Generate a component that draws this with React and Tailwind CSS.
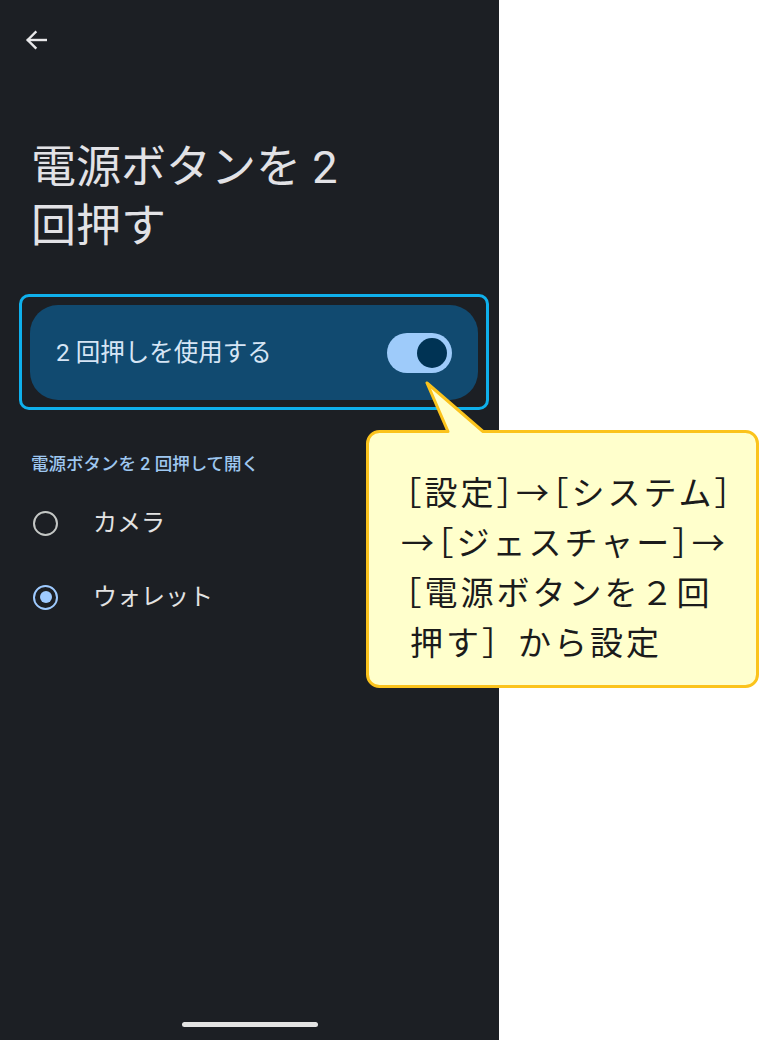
const font = { fontFamily: 'Roboto, "Noto Sans CJK JP", sans-serif' }

function BackArrow() {
  return (
    <svg width="22" height="20" viewBox="0 0 22 20" fill="none" stroke="#e8e8ea" strokeWidth="2.4" strokeLinecap="square">
      <path d="M21 10H3" />
      <path d="M10.5 2.2 2.7 10l7.8 7.8" />
    </svg>
  )
}

function Radio({ checked, label }) {
  return (
    <div className="h-[74px] flex items-center pl-[33px]">
      <div
        className={
          checked
            ? 'w-[25px] h-[25px] rounded-full border-[2.5px] border-[#9ecaff] flex items-center justify-center'
            : 'w-[25px] h-[25px] rounded-full border-[2.5px] border-[#c4c7c5]'
        }
      >
        {checked && <div className="w-[12px] h-[12px] rounded-full bg-[#9ecaff]" />}
      </div>
      <span className="ml-[35px] text-[24px] leading-[32px] text-[#e3e3e3]">{label}</span>
    </div>
  )
}

// half-width bracket, as the annotation tool sets them
function B({ children }) {
  return <span className="[font-feature-settings:'halt']">{children}</span>
}

function Callout() {
  return (
    <div className="absolute left-[364px] top-[380px] w-[398px] h-[310px]">
      <svg className="absolute inset-0" width="398" height="310" viewBox="0 0 398 310">
        <path
          d="M15.5 51.5H84L63 3l56 48.5h262.5a12 12 0 0 1 12 12v231a12 12 0 0 1-12 12h-366a12 12 0 0 1-12-12v-231a12 12 0 0 1 12-12Z"
          fill="#ffffcc"
          stroke="#fbc31c"
          strokeWidth="3"
          strokeLinejoin="round"
        />
      </svg>
      <div
        className="absolute left-[37px] top-[86px] text-[33px] leading-[50px] tracking-[3px] text-[#1b1b1b] whitespace-nowrap"
        style={{ fontFamily: '"Noto Sans CJK JP", sans-serif' }}
      >
        <div className="pl-[4px]">
          <B>［</B>設定<B>］</B>→<B>［</B>システム<B>］</B>
        </div>
        <div>
          →<B>［</B>ジェスチャー<B>］</B>→
        </div>
        <div className="pl-[4px]">
          <B>［</B>電源ボタンを２回
        </div>
        <div className="pl-[9px]">押す］から設定</div>
      </div>
    </div>
  )
}

export default function App() {
  return (
    <div className="relative w-[768px] h-[1040px] bg-white overflow-hidden" style={font}>
      <div className="flex flex-col w-[499px] h-full bg-[#1c1f24]">
        <div className="pl-[25px] pt-[30px]">
          <BackArrow />
        </div>

        <h1 className="mt-[88px] pl-[31px] text-[45px] leading-[59px] font-normal text-[#e2e2e6]">
          電源ボタンを 2
          <br />
          回押す
        </h1>

        <div className="mt-[38px] ml-[19px] w-[470px] h-[116px] border-[3px] border-[#0fb0ec] rounded-[10px] pt-[8px] px-[8px]">
          <div className="h-[95px] rounded-[28px] bg-[#114a70] flex items-center justify-between pl-[26px] pr-[26px]">
            <span className="text-[24.5px] leading-[32px] text-[#d6e5f5]">2 回押しを使用する</span>
            <div className="w-[65px] h-[40px] rounded-full bg-[#9ecbfa] flex items-center justify-end pr-[5px]">
              <div className="w-[30px] h-[30px] rounded-full bg-[#003354]" />
            </div>
          </div>
        </div>

        <p className="mt-[42px] pl-[31px] text-[17.5px] leading-[24px] font-medium text-[#9ec7f0]">
          電源ボタンを 2 回押して開く
        </p>

        <div className="mt-[10px] flex flex-col">
          <Radio label="カメラ" />
          <Radio checked label="ウォレット" />
        </div>

        <div className="mt-auto mb-[13px] self-center w-[136px] h-[5px] rounded-full bg-[#e3e3e3]" />
      </div>

      <Callout />
    </div>
  )
}
